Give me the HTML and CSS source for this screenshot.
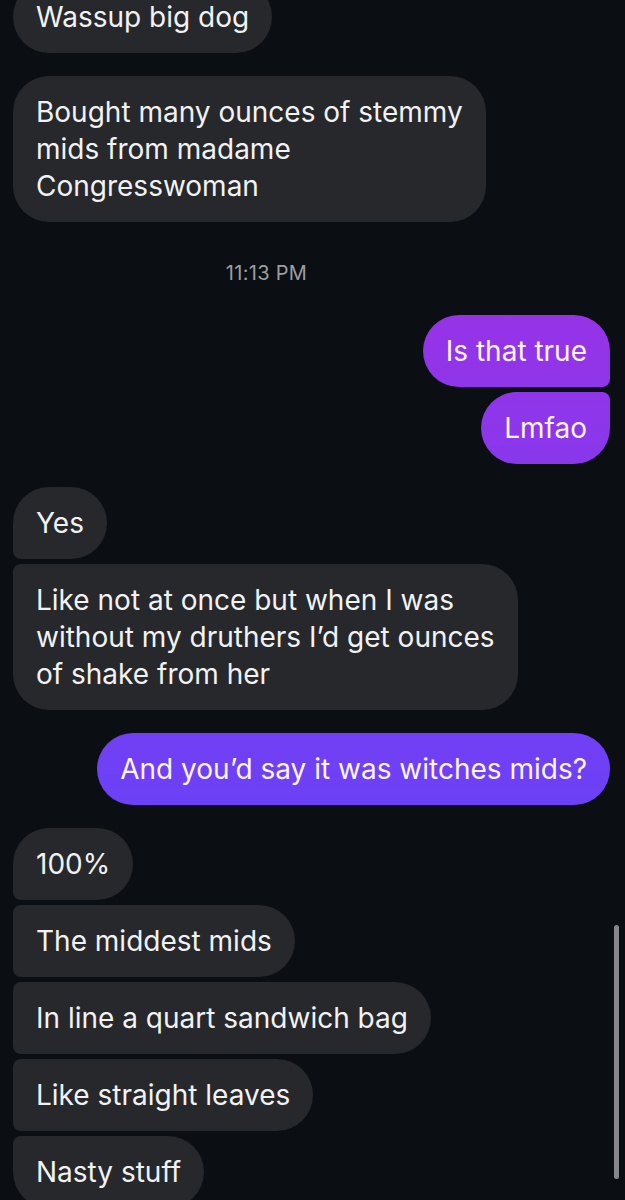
FILE: index.html
```html
<!DOCTYPE html>
<html lang="en">
<head>
    <meta charset="UTF-8">
    <meta name="viewport" content="width=device-width, initial-scale=1.0">
    <title>Messages</title>
    <link rel="stylesheet" href="styles.css">
</head>
<body>

<main class="thread">
    <div class="group in">
        <div class="bubble">Wassup big dog</div>
    </div>
    <div class="group in">
        <div class="bubble">Bought many ounces of stemmy<br>mids from madame<br>Congresswoman</div>
    </div>

    <div class="time">11:13 PM</div>

    <div class="group out">
        <div class="bubble">Is that true</div>
        <div class="bubble">Lmfao</div>
    </div>

    <div class="group in">
        <div class="bubble">Yes</div>
        <div class="bubble">Like not at once but when I was<br>without my druthers I’d get ounces<br>of shake from her</div>
    </div>

    <div class="group out">
        <div class="bubble">And you’d say it was witches mids?</div>
    </div>

    <div class="group in">
        <div class="bubble">100%</div>
        <div class="bubble">The middest mids</div>
        <div class="bubble">In line a quart sandwich bag</div>
        <div class="bubble">Like straight leaves</div>
        <div class="bubble">Nasty stuff</div>
    </div>
</main>

<div class="scrollbar"></div>

</body>
</html>
```

FILE: styles.css
```css
* {
    margin: 0;
    padding: 0;
    box-sizing: border-box;
}

body {
    font-family: 'Inter', 'Roboto', sans-serif;
    background-color: #0b0e12;
    color: #f2f2f3;
    height: 1200px;
    overflow: hidden;
}

.thread {
    display: flex;
    flex-direction: column;
    gap: 23px;
    padding: 0 15px 0 13px;
    margin-top: -19px;
}

.group {
    display: flex;
    flex-direction: column;
    gap: 5px;
}

.group.in {
    align-items: flex-start;
}

.group.out {
    align-items: flex-end;
}

.bubble {
    font-size: 28px;
    line-height: 37px;
    padding: 17.5px 23px;
    border-radius: 36px;
    background-color: #26282c;
}

.out .bubble {
    color: #fbf4ff;
    background: linear-gradient(180deg, #b128df 0%, #9334e8 29%, #6f40f5 64%, #4a4dff 100%);
    background-attachment: fixed;
}

/* corners facing the next/previous bubble in a group */
.in .bubble:not(:last-child) {
    border-bottom-left-radius: 8px;
}

.in .bubble:not(:first-child) {
    border-top-left-radius: 8px;
}

.out .bubble:not(:last-child) {
    border-bottom-right-radius: 8px;
}

.out .bubble:not(:first-child) {
    border-top-right-radius: 8px;
}

.time {
    text-align: center;
    font-size: 20px;
    line-height: 24px;
    letter-spacing: 0.3px;
    color: #9c9ea3;
    padding: 16px 90px 7px 0;
}

.scrollbar {
    position: fixed;
    right: 6px;
    top: 925px;
    width: 5px;
    height: 254px;
    border-radius: 3px;
    background-color: #85878c;
}
```
